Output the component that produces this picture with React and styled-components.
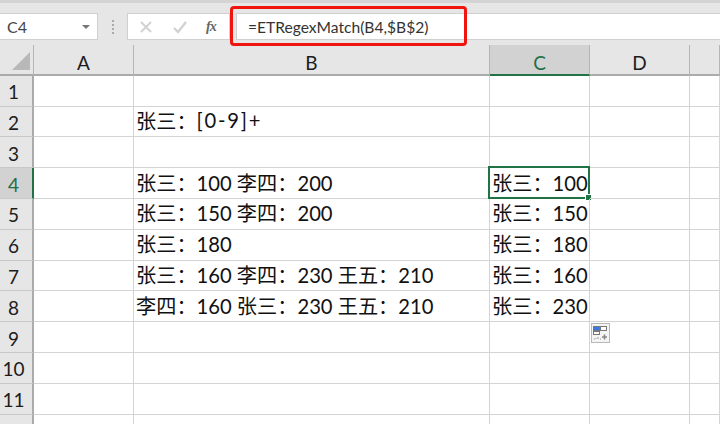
import React from 'react'
import styled, { createGlobalStyle } from 'styled-components'

const GlobalStyle = createGlobalStyle`
  html, body {
    margin: 0;
    padding: 0;
    background: #fff;
    overflow: hidden;
  }
`

const Sheet = styled.div`
  position: relative;
  width: 720px;
  height: 424px;
  overflow: hidden;
  background: #fff;
  font-family: Lato, "Noto Sans CJK SC", sans-serif;
  color: #111;
`

const FormulaBar = styled.div`
  display: flex;
  align-items: stretch;
  height: 27px;
  padding: 10px 0 5px;
  background: #e6e6e6;
  border-top: 3px solid #d4d4d4;
`

const NameBox = styled.div`
  box-sizing: border-box;
  width: 98px;
  display: flex;
  align-items: center;
  justify-content: space-between;
  padding: 0 6px 0 7px;
  background: #fff;
  border: 1px solid #d0d0d0;
  border-left: 0;
  font-size: 16px;
  color: #444;
`

const Caret = styled.span`
  width: 0;
  height: 0;
  margin-right: 1px;
  border-left: 4px solid transparent;
  border-right: 4px solid transparent;
  border-top: 4px solid #777;
`

const Grip = styled.div`
  width: 29px;
  display: flex;
  flex-direction: column;
  align-items: center;
  justify-content: center;
  gap: 2px;

  i {
    width: 2px;
    height: 2px;
    background: #aaa;
  }
`

const ButtonBox = styled.div`
  box-sizing: border-box;
  width: 103px;
  display: flex;
  align-items: center;
  padding-left: 11px;
  background: #fff;
  border: 1px solid #d0d0d0;
`

const IconSlot = styled.span`
  display: flex;
  width: ${props => props.$width}px;
  color: #d2d2d2;
`

const FxLabel = styled.span`
  font-family: "Liberation Serif", serif;
  font-style: italic;
  font-size: 14px;
  font-weight: 700;
  color: #666;
  letter-spacing: -1px;
`

const FormulaInput = styled.div`
  box-sizing: border-box;
  flex: 1;
  margin-left: 6px;
  padding-left: 11px;
  display: flex;
  align-items: center;
  background: #fff;
  border: 1px solid #d0d0d0;
  border-right: 0;
  font-size: 15.6px;
  color: #333;
`

const RedFrame = styled.div`
  position: absolute;
  left: 230px;
  top: 6px;
  width: 237px;
  height: 40px;
  box-sizing: border-box;
  border: 3px solid #f0140f;
  border-radius: 4px;
`

const Grid = styled.div`
  display: grid;
  grid-template-columns: 34px 100px 356px 100px 100px 30px;
  grid-auto-rows: 30.8px;
`

const Corner = styled.div`
  background: #e6e6e6;
  border-right: 1px solid #b5b5b5;
  border-bottom: 2px solid #ababab;
  box-sizing: border-box;
  display: flex;
  align-items: flex-end;
  justify-content: flex-end;
  padding: 0 3px 4px 0;
`

const Triangle = styled.span`
  width: 0;
  height: 0;
  border-left: 18px solid transparent;
  border-bottom: 18px solid #b8b8b8;
`

const ColHead = styled.div`
  box-sizing: border-box;
  display: flex;
  align-items: center;
  justify-content: center;
  font-size: 19px;
  padding-top: 6px;
  background: ${props => (props.$active ? '#d2d2d2' : '#e6e6e6')};
  color: ${props => (props.$active ? '#1f6f46' : '#1c1c1c')};
  border-right: 1px solid #b5b5b5;
  border-bottom: 2px solid ${props => (props.$active ? '#217346' : '#ababab')};
`

const RowHead = styled.div`
  box-sizing: border-box;
  display: flex;
  align-items: center;
  justify-content: center;
  font-size: 19px;
  padding: 2px 5px 0 0;
  background: ${props => (props.$active ? '#d2d2d2' : '#e6e6e6')};
  color: ${props => (props.$active ? '#1f6f46' : '#1c1c1c')};
  border-right: 2px solid ${props => (props.$active ? '#217346' : '#ababab')};
  border-bottom: 1px solid #c8c8c8;
`

const Cell = styled.div`
  position: relative;
  box-sizing: border-box;
  display: flex;
  align-items: center;
  padding: 0 0 2px 2px;
  white-space: pre;
  font-size: 20.2px;
  font-weight: 400;
  color: #111;
  border-right: 1px solid #d4d4d4;
  border-bottom: 1px solid #d4d4d4;
`

const Pattern = styled.span`
  letter-spacing: 1.8px;
`

const Selection = styled.div`
  position: absolute;
  inset: -2px -1px -1px -2px;
  border: 2px solid #217346;

  &::after {
    content: '';
    position: absolute;
    right: -4px;
    bottom: -4px;
    width: 5px;
    height: 5px;
    background: #217346;
    border: 1px solid #fff;
  }
`

const PasteOptions = styled.div`
  position: absolute;
  left: 591px;
  top: 323px;
  width: 19px;
  height: 20px;
  box-sizing: border-box;
  background: #f4f4f4;
  border: 1px solid #b8b8b8;
  display: flex;
  align-items: center;
  justify-content: center;
`

const columns = ['A', 'B', 'C', 'D', '']

const rows = {
  2: { B: <>张三：<Pattern>[0-9]+</Pattern></> },
  4: { B: '张三：100 李四：200', C: '张三：100' },
  5: { B: '张三：150 李四：200', C: '张三：150' },
  6: { B: '张三：180', C: '张三：180' },
  7: { B: '张三：160 李四：230 王五：210', C: '张三：160' },
  8: { B: '李四：160 张三：230 王五：210', C: '张三：230' },
}

const rowNumbers = [1, 2, 3, 4, 5, 6, 7, 8, 9, 10, 11, 12]

const App = () => (
  <Sheet>
    <GlobalStyle />
    <FormulaBar>
      <NameBox>
        C4
        <Caret />
      </NameBox>
      <Grip>
        <i />
        <i />
        <i />
        <i />
      </Grip>
      <ButtonBox>
        <IconSlot $width={34}>
          <svg width="14" height="14" viewBox="0 0 14 14" fill="none" stroke="currentColor" strokeWidth="2">
            <path d="M2 2l10 10M12 2L2 12" />
          </svg>
        </IconSlot>
        <IconSlot $width={33}>
          <svg width="14" height="14" viewBox="0 0 14 14" fill="none" stroke="currentColor" strokeWidth="2.4">
            <path d="M1 8l4 4 8-10" />
          </svg>
        </IconSlot>
        <FxLabel>fx</FxLabel>
      </ButtonBox>
      <FormulaInput>=ETRegexMatch(B4,$B$2)</FormulaInput>
    </FormulaBar>
    <Grid>
      <Corner>
        <Triangle />
      </Corner>
      {columns.map(col => (
        <ColHead key={col} $active={col === 'C'}>
          {col}
        </ColHead>
      ))}
      {rowNumbers.map(n => (
        <React.Fragment key={n}>
          <RowHead $active={n === 4}>{n}</RowHead>
          {columns.map(col => (
            <Cell key={col}>
              {rows[n] && rows[n][col]}
              {n === 4 && col === 'C' && <Selection />}
            </Cell>
          ))}
        </React.Fragment>
      ))}
    </Grid>
    <RedFrame />
    <PasteOptions>
      <svg width="15" height="15" viewBox="0 0 15 15">
        <rect x="0.5" y="0.5" width="6" height="4" fill="#3b78e7" stroke="#777" />
        <rect x="7.5" y="0.5" width="6" height="4" fill="#fff" stroke="#777" />
        <rect x="0.5" y="5.5" width="6" height="3" fill="#fff" stroke="#777" />
        <path d="M1 13h1M3 12v1M5 11v2M7 13h1" stroke="#999" />
        <path d="M9 11h5M11.5 8.5v5" stroke="#888" strokeWidth="1.6" />
      </svg>
    </PasteOptions>
  </Sheet>
)

export default App
